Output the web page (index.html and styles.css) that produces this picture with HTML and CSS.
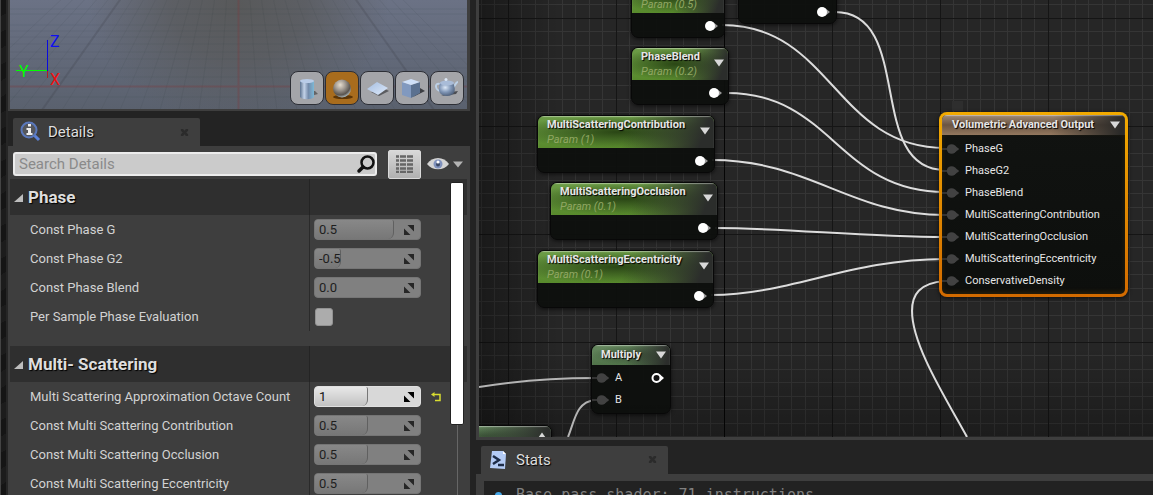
FILE: index.html
```html
<!DOCTYPE html>
<html lang="en">
<head>
<meta charset="utf-8">
<title>Material Editor</title>
<link rel="stylesheet" href="styles.css">
</head>
<body>
<svg class="defs" width="0" height="0" aria-hidden="true">
  <defs>
    <symbol id="expand" viewBox="0 0 12 12"><path d="M4.500 1h6.500v6.500zM1 4.500v6.500h6.500z"/></symbol>
    <symbol id="pin" viewBox="0 0 14 12"><path class="pin-tip" d="M8 2l5 4-5 4z"/><circle cx="5" cy="6" r="5"/></symbol>
    <symbol id="pin-in" viewBox="0 0 24 12"><path class="pin-lead" d="M0 6h8" fill="none"/><path d="M13 2l5 4-5 4z"/><circle cx="10" cy="6" r="5"/></symbol>
    <symbol id="down" viewBox="0 0 10 8"><path d="M0 0.5h10L5 7.5z"/></symbol>
    <symbol id="close" viewBox="0 0 10 10"><path d="M1 1l2.500 0 1.500 2 1.500-2 2.500 0v2L7 5l2 2v2H6.500L5 7 3.500 9H1V7l2-2-2-2z"/></symbol>
    <linearGradient id="steel" x1="0" x2="1"><stop offset="0" stop-color="#5d7390"/><stop offset=".3" stop-color="#c3d2e8"/><stop offset=".6" stop-color="#748bab"/><stop offset="1" stop-color="#7cb8d6"/></linearGradient>
    <radialGradient id="ball" cx=".4" cy=".3" r=".7"><stop offset="0" stop-color="#e6ddcf"/><stop offset=".4" stop-color="#a39c94"/><stop offset=".8" stop-color="#59544f"/><stop offset="1" stop-color="#a9b5b9"/></radialGradient>
    <linearGradient id="sheet" x1="0" x2="1" y1="0" y2="1"><stop offset="0" stop-color="#a4bde0"/><stop offset="1" stop-color="#dfeafa"/></linearGradient>
    <radialGradient id="pot" cx=".4" cy=".35" r=".7"><stop offset="0" stop-color="#dce8f7"/><stop offset=".5" stop-color="#8298b8"/><stop offset="1" stop-color="#4a5b75"/></radialGradient>
  </defs>
</svg>
<main class="editor">
  <div class="edge"></div>
  <section class="left">
    <div class="viewport">
      <svg class="floor" aria-hidden="true">
        <g transform="translate(-10 0)" fill="none">
          <path class="floor-minor" d="M238-167L219 110M238-167L199 110M238-167L179 110M238-167L160 110M238-167L140 110M238-167L120 110M238-167L101 110M238-167L81 110M238-167L62 110M238-167L22 110M238-167L3 110M238-167L-17 110M238-167L-37 110M238-167L-56 110M238-167L258 110M238-167L277 110M238-167L297 110M238-167L316 110M238-167L336 110M238-167L356 110M238-167L375 110M238-167L395 110M238-167L414 110M238-167L453 110M238-167L473 110M238-167L493 110M238-167L512 110M0 97H480M0 77H480M0 68H480M0 59H480M0 52H480M0 44H480M0 37H480M0 31H480M0 25H480M0 14H480M0 9H480"/>
          <path class="floor-major" d="M238-167L42 110M238-167L434 110"/>
          <path class="floor-axis" d="M0 86.500H480M238.500 0V110"/>
        </g>
      </svg>
      <svg class="axes" width="56" height="60" viewBox="0 0 56 60" aria-hidden="true">
        <path d="M37.500 11v31" stroke="#0a0ae0"/><path d="M6 41.500h31" stroke="#0f0"/><path d="M37.500 42v7" stroke="#b02020"/>
        <text x="40" y="18" fill="#1010f0">Z</text><text x="9" y="48" fill="#0f0">Y</text><text x="40" y="56" fill="#f01010">X</text>
      </svg>
      <div class="shapes">
        <button type="button" aria-label="Cylinder"><svg viewBox="0 0 32 32"><path d="M16 25l11-3-3-3h-5z" fill="#444a" /><path d="M9 9v16c2 3 12 3 14 0V9z" fill="url(#steel)"/><ellipse cx="16" cy="9" rx="7" ry="2" fill="#b9cce8"/></svg></button>
        <button type="button" class="on" aria-label="Sphere"><svg viewBox="0 0 32 32"><ellipse cx="17" cy="25" rx="10" ry="2" fill="#5b3507"/><circle cx="16" cy="16.500" r="9" fill="url(#ball)"/></svg></button>
        <button type="button" aria-label="Plane"><svg viewBox="0 0 32 32"><path d="M10 20l8 4 10-5-4-2z" fill="#5b5c60"/><path d="M16 10l11 6-10 7-11-6z" fill="url(#sheet)"/></svg></button>
        <button type="button" aria-label="Cube"><svg viewBox="0 0 32 32"><path d="M17 25l12-6-5-3z" fill="#3c3e43"/><path d="M6 10l9 3v13l-9-3z" fill="#8199bf"/><path d="M15 13l9-3v11l-9 5z" fill="#5b7190"/><path d="M6 10l9-3 9 3-9 3z" fill="#cfe0f8"/></svg></button>
        <button type="button" aria-label="Teapot"><svg viewBox="0 0 32 32"><path d="M10 24l15-2 2-3-7 1z" fill="#4b4d52"/><path d="M9 12c-6-2-5 7 1 7M22 15c3-1 2-5 5-5" fill="none" stroke="#bcd0e6" stroke-width="2"/><path d="M9 11c-3 8 0 13 7 13s10-5 6-13z" fill="url(#pot)"/><ellipse cx="16" cy="11" rx="7" ry="2.500" fill="#a9bcd8"/><circle cx="15" cy="7.500" r="1.500" fill="#dce8f7"/></svg></button>
      </div>
    </div>
    <div class="tabs">
      <div class="tab">
        <svg width="22" height="22" viewBox="0 0 22 22" aria-hidden="true"><path d="M14 14l5 5" stroke="#5d82d8" stroke-width="3"/><circle cx="9" cy="9" r="7.500" fill="#55575c" stroke="#5a78bc" stroke-width="2"/><path d="M8 3h3v2.500H8zM6.500 7H11v5h1.500v2h-6v-2H8V9H6.500z" fill="#eee"/></svg>
        <span>Details</span>
        <button type="button" class="close" aria-label="Close Details"><svg width="9" height="9"><use href="#close"/></svg></button>
      </div>
    </div>
    <div class="details">
      <div class="tools">
        <div class="search">
          <input type="text" placeholder="Search Details" aria-label="Search Details">
          <svg width="20" height="20" viewBox="0 0 20 20" aria-hidden="true"><circle cx="12.500" cy="8.500" r="6" fill="none" stroke="#111" stroke-width="2.500"/><path d="M8 13l-4 4" stroke="#111" stroke-width="3.500" stroke-linecap="round"/></svg>
        </div>
        <button type="button" class="matrix" aria-label="Property matrix"><svg width="17" height="18" viewBox="0 0 17 18"><path d="M0 1.500h17M0 5.500h17M0 9.500h17M0 13.500h17M0 17h17" stroke="#666" stroke-width="2.500" stroke-dasharray="3 1 6 1 6"/></svg></button>
        <button type="button" class="eye" aria-label="View options"><svg width="36" height="16" viewBox="0 0 36 16"><path d="M0 8C5 0 17 0 22 8 17 15 5 15 0 8z" fill="#d4d4d4"/><circle cx="11" cy="8" r="4.500" fill="#8092bd"/><circle cx="11" cy="8.500" r="2" fill="#3b4866"/><circle cx="11" cy="6" r="1.500" fill="#fff"/><path d="M26 5.500h10l-5 6z" fill="#b4b4b4"/></svg></button>
      </div>
      <div class="props">
        <section>
          <h2><svg width="10" height="10" viewBox="0 0 10 10"><path d="M9 1v8H0z"/></svg>Phase</h2>
          <div class="row"><label for="g">Const Phase G</label><div class="spin"><i style="width:75%"></i><input id="g" value="0.5"><svg width="12" height="12"><use href="#expand"/></svg></div></div>
          <div class="row"><label for="g2">Const Phase G2</label><div class="spin"><i style="width:25%"></i><input id="g2" value="-0.5"><svg width="12" height="12"><use href="#expand"/></svg></div></div>
          <div class="row"><label for="pb">Const Phase Blend</label><div class="spin"><input id="pb" value="0.0"><svg width="12" height="12"><use href="#expand"/></svg></div></div>
          <div class="row"><label for="ps">Per Sample Phase Evaluation</label><div class="cell"><input type="checkbox" id="ps"></div></div>
        </section>
        <section>
          <h2><svg width="10" height="10" viewBox="0 0 10 10"><path d="M9 1v8H0z"/></svg>Multi- Scattering</h2>
          <div class="row"><label for="oc">Multi Scattering Approximation Octave Count</label><div class="spin live"><i style="width:50%"></i><input id="oc" value="1"><svg width="12" height="12"><use href="#expand"/></svg></div><button type="button" class="reset" aria-label="Reset to default"><svg width="11" height="10" viewBox="0 0 11 10"><path d="M2 2.500h7v6H4" fill="none" stroke="#d8dc30" stroke-width="1.500"/><path d="M0 2.500L3.500 0v5z" fill="#d8dc30"/></svg></button></div>
          <div class="row"><label for="mc">Const Multi Scattering Contribution</label><div class="spin"><i style="width:50%"></i><input id="mc" value="0.5"><svg width="12" height="12"><use href="#expand"/></svg></div></div>
          <div class="row"><label for="mo">Const Multi Scattering Occlusion</label><div class="spin"><i style="width:50%"></i><input id="mo" value="0.5"><svg width="12" height="12"><use href="#expand"/></svg></div></div>
          <div class="row"><label for="me">Const Multi Scattering Eccentricity</label><div class="spin"><i style="width:50%"></i><input id="me" value="0.5"><svg width="12" height="12"><use href="#expand"/></svg></div></div>
        </section>
        <div class="scroll"><div class="thumb"></div></div>
      </div>
    </div>
  </section>
  <section class="right">
    <div class="graph">
      <svg class="canvas" aria-hidden="true">
        <defs>
          <pattern id="grid" x="29" y="18" width="108" height="108" patternUnits="userSpaceOnUse">
            <path class="minor" d="M13.500 0v108M27.500 0v108M40.500 0v108M54.500 0v108M67.500 0v108M81.500 0v108M94.500 0v108M0 13.500h108M0 27.500h108M0 40.500h108M0 54.500h108M0 67.500h108M0 81.500h108M0 94.500h108"/>
            <path class="major" d="M.5 0v108M0 .5h108"/>
          </pattern>
        </defs>
        <rect width="100%" height="100%" fill="url(#grid)"/>
        <path d="M245.500 0v437" stroke="#050505"/>
      </svg>
      <div class="vignette"></div>
      <svg class="canvas wires" aria-hidden="true">
        <g transform="translate(-479 0)">
          <path d="M722 25C832 25 835 148 945 148"/>
          <path d="M835 12C915 12 865 170 945 170"/>
          <path d="M727 93C832 93 838 192 945 192"/>
          <path d="M712 160C810 160 850 215 945 215"/>
          <path d="M715 228C790 228 860 237 945 237"/>
          <path d="M711 295C790 295 850 259 945 259"/>
          <path d="M945 281C919 283 912 295 912 311C912 345 945 397 967 437"/>
          <path class="dim" d="M479 387C515 381 555 378 595 378M568 437C575 420 576 402 595 400"/>
        </g>
      </svg>
      <article class="node param n-g"><header><div><b></b><em>Param (0.5)</em></div></header><svg class="pin"><use href="#pin"/></svg></article>
      <article class="node n-g2"><svg class="pin"><use href="#pin"/></svg></article>
      <article class="node param n-blend"><header><div><b>PhaseBlend</b><em>Param (0.2)</em></div><svg class="down"><use href="#down"/></svg></header><svg class="pin"><use href="#pin"/></svg></article>
      <article class="node param n-con"><header><div><b>MultiScatteringContribution</b><em>Param (1)</em></div><svg class="down"><use href="#down"/></svg></header><svg class="pin"><use href="#pin"/></svg></article>
      <article class="node param n-occ"><header><div><b>MultiScatteringOcclusion</b><em>Param (0.1)</em></div><svg class="down"><use href="#down"/></svg></header><svg class="pin"><use href="#pin"/></svg></article>
      <article class="node param n-ecc"><header><div><b>MultiScatteringEccentricity</b><em>Param (0.1)</em></div><svg class="down"><use href="#down"/></svg></header><svg class="pin"><use href="#pin"/></svg></article>
      <article class="node math n-mul"><header><b>Multiply</b><svg class="down"><use href="#down"/></svg></header>
        <ul><li><svg class="in"><use href="#pin-in"/></svg>A<svg class="ring" viewBox="0 0 14 12"><path d="M9 2.500l4 3.500-4 3.500z" fill="#fff"/><circle cx="5.500" cy="6" r="4" fill="#111" stroke="#fff" stroke-width="2"/></svg></li><li><svg class="in"><use href="#pin-in"/></svg>B</li></ul>
      </article>
      <article class="node math n-low"><header><svg class="down up"><use href="#down"/></svg></header></article>
      <div class="note"></div>
      <article class="node out n-out"><header><b>Volumetric Advanced Output</b><svg class="down"><use href="#down"/></svg></header>
        <ul>
          <li><svg class="in"><use href="#pin-in"/></svg>PhaseG</li>
          <li><svg class="in"><use href="#pin-in"/></svg>PhaseG2</li>
          <li><svg class="in"><use href="#pin-in"/></svg>PhaseBlend</li>
          <li><svg class="in"><use href="#pin-in"/></svg>MultiScatteringContribution</li>
          <li><svg class="in"><use href="#pin-in"/></svg>MultiScatteringOcclusion</li>
          <li><svg class="in"><use href="#pin-in"/></svg>MultiScatteringEccentricity</li>
          <li><svg class="in"><use href="#pin-in"/></svg>ConservativeDensity</li>
        </ul>
      </article>
    </div>
    <div class="stats">
      <div class="tabs">
        <div class="tab">
          <svg width="20" height="20" viewBox="0 0 20 20" aria-hidden="true"><path d="M4 1h11l3 3-1 15L2 18z" fill="#b4cbf5"/><path d="M15 1l3 3h-3z" fill="#fff"/><path d="M5 6l6 4-6 4M10 15h6" fill="none" stroke="#1d2c48" stroke-width="2.500"/></svg>
          <span>Stats</span>
          <button type="button" class="close" aria-label="Close Stats"><svg width="9" height="9"><use href="#close"/></svg></button>
        </div>
      </div>
      <div class="log"><p><span class="dot"></span>Base pass shader: 71 instructions</p></div>
    </div>
  </section>
</main>
</body>
</html>
```
FILE: styles.css
```css
* { box-sizing: border-box; }
body { margin: 0; background: #232323; color: #d2d2d2; font: 13px/16px Roboto, "Liberation Sans", sans-serif; overflow: hidden; }
button { padding: 0; border: 0; background: none; }
svg { display: block; flex: none; }
.defs { position: absolute; }

.editor { display: grid; grid-template-columns: 8px 462px minmax(0, 1fr); height: 100vh; }
.edge { border-left: 1px solid #444; border-right: 2px solid #262626; background: repeating-linear-gradient(150deg, #151515 0 14px, #1c1c1c 14px 28px); }
.left, .right { display: flex; flex-direction: column; min-width: 0; min-height: 0; }
.right { margin-left: 6px; }

.viewport { position: relative; flex: none; height: 111px; border: solid #3e3e3e; border-width: 0 3px 2px 2px; overflow: hidden;
  background: radial-gradient(ellipse 150px 120px at 50% 5%, #58595a, #595a5ccc 45%, transparent), linear-gradient(#6b7285, #5a616e); }
.floor { width: 100%; height: 100%; }
.floor-minor { stroke: #2b2d33; stroke-opacity: .08; }
.floor-major { stroke: #2b2d33; stroke-opacity: .16; stroke-width: 2; }
.floor-axis { stroke: #7a3c40; stroke-opacity: .35; stroke-width: 2; }
.axes { position: absolute; left: 0; top: 29px; font-size: 16px; }
.shapes { position: absolute; right: 3px; bottom: 4px; display: flex; gap: 1px; }
.shapes button { width: 34px; height: 34px; border: 1px solid #2d2f36; border-radius: 8px; background: #a4a5a9; }
.shapes .on { background: #a86c1d; }

.tabs { display: flex; padding: 7px 5px 0; flex: none; }
.tab { display: flex; align-items: center; gap: 6px; width: 187px; height: 28px; padding: 0 11px 0 7px; background: #3e3e3e; border-radius: 2px 2px 0 0; font-size: 15px; color: #dedede; text-shadow: 1px 1px 1px #000; }
.close { margin-left: auto; fill: #2b2b2b; }

.details { flex: 1; min-height: 0; display: flex; flex-direction: column; padding: 3px 3px 0 2px; background: #3e3e3e; }
.tools { display: flex; align-items: center; height: 30px; padding: 0 4px 0 3px; flex: none; }
.search { display: flex; align-items: center; flex: 1; height: 24px; border: 2px solid #ececec; border-radius: 3px; background: #cbcbcb; }
.search input { flex: 1; min-width: 0; padding: 0 4px; border: 0; background: none; font: 15px/18px Roboto, sans-serif; color: #222; }
.search input::placeholder { color: #8a8a8a; opacity: 1; }
.matrix { display: grid; place-items: center; width: 33px; height: 29px; margin: 0 6px 0 11px; background: linear-gradient(#d8d8d8, #b0b0b0); border: 1px solid #dadada; border-radius: 2px; }

.props { position: relative; flex: 1; min-height: 0; overflow: hidden; }
.props section { margin-bottom: 15px; }
.props h2 { display: flex; align-items: center; gap: 4px; height: 36px; margin: 0; padding: 0 0 1px 4px; background: linear-gradient(90deg, transparent 299px, #242424 299px 300px, transparent 300px) #2f2f2f; font-size: 17px; line-height: 20px; font-weight: 700; color: #dedede; text-shadow: 1px 1px 1px #000; }
.props h2 svg { fill: #bdbdbd; margin-top: 3px; }
.row { display: flex; align-items: center; height: 29px; padding-left: 20px; background: linear-gradient(90deg, transparent 299px, #2a2a2a 299px 300px, transparent 300px); }
.row label { width: 284px; }
.cell { display: flex; }
.spin { position: relative; display: flex; align-items: center; width: 107px; height: 21px; padding-right: 5px; border-radius: 4px; background: #808080; border: 1px solid #757575; overflow: hidden; color: #1e1e1e; fill: #262626; }
.spin i { position: absolute; inset: 0 auto 0 0; border-right: 1px solid #606060; border-radius: 0 2px 6px 0; background: linear-gradient(#888, #777); }
.spin input { position: relative; flex: 1; min-width: 0; padding: 0 4px; border: 0; background: none; font: inherit; color: inherit; }
.spin svg { position: relative; }
.live { background: #d8d8d8; border-color: #e0e0e0; color: #111; fill: #000; }
.live i { background: linear-gradient(#e8e8e8, #c2c2c2); border-right-color: #777; }
.cell input { appearance: none; width: 18px; height: 18px; margin: 0 1px; border: 1px solid #929292; border-radius: 3px; background: #acacac; }
.reset { margin-left: 10px; }
.scroll { position: absolute; top: 3px; right: 3px; bottom: 0; width: 14px; background: linear-gradient(90deg, transparent 7px, #666 7px 8px, transparent 8px); }
.thumb { height: 243px; border: 1px solid #222; border-radius: 2px; background: #fff; }

.graph { position: relative; flex: 1; min-height: 0; overflow: hidden; border: solid #3e3e3e; border-width: 0 0 3px 3px; background: #262626; }
.canvas { position: absolute; inset: 0; width: 100%; height: 100%; }
.minor { stroke: #353535; fill: none; }
.major { stroke: #151515; fill: none; }
.vignette { position: absolute; inset: 0; background: linear-gradient(90deg, #0005, transparent 80px), linear-gradient(0deg, #0004, transparent 90px); }
.wires { fill: none; stroke: #dcdcdc; stroke-width: 2; }
.dim { stroke: #b4b4b4; }

.node { position: absolute; border: 1px solid #080808; border-radius: 7px; background: #0d0f0df0; box-shadow: 0 1px 4px #000a; overflow: hidden; color: #e6e6e6; font-size: 11px; line-height: 14px; }
.node header { display: flex; align-items: center; justify-content: space-between; padding: 0 4px 0 9px; box-shadow: inset 0 1px 1px #fff6; }
.node b { display: block; font-size: 11px; line-height: 14px; text-shadow: 1px 1px 1px #000; white-space: nowrap; }
.node em { display: block; margin-top: 1px; color: #91a763; }
.node b:empty { height: 14px; }
.node ul { margin: 0; padding: 3px 0 2px; list-style: none; }
.node li { display: flex; align-items: center; height: 22px; }
.down { width: 10px; height: 8px; fill: #d8d8d8; }
.param .down { margin-bottom: 3px; }
.up { margin-left: auto; transform: rotate(180deg); }
.pin { width: 14px; height: 12px; margin: 7px 5px 5px auto; fill: #fff; }
.pin-tip { fill: #9a9a9a; }
.in { width: 23px; height: 12px; fill: #424242; stroke: none; }
.pin-lead { stroke: #333; stroke-width: 2; }
.ring { width: 14px; height: 12px; margin: 0 5px 0 auto; }
.param header { height: 32px; background: linear-gradient(110deg, transparent 50%, #2b2d2b 92%), radial-gradient(ellipse 60% 50% at 45% 50%, #2a4615, #2a461577 55%, transparent), linear-gradient(#6c9c47, #588a2c); }
.math header { height: 20px; background: linear-gradient(100deg, transparent 45%, #2b2d2b 95%), radial-gradient(ellipse 50% 50% at 50% 50%, #3c5438, transparent), linear-gradient(#66885f, #507349); }
.out header { height: 20px; padding: 0 5px 0 10px; background: linear-gradient(100deg, transparent 60%, #2b2a28 97%), linear-gradient(#a08c78, #6b5543 50%, #94785f); }
.n-g { left: 152px; top: -20px; width: 94px; }
.n-g2 { left: 259px; top: -34px; width: 99px; padding-top: 32px; }
.n-blend { left: 152px; top: 47px; width: 98px; }
.n-con { left: 58px; top: 115px; width: 178px; }
.n-occ { left: 71px; top: 182px; width: 168px; }
.n-ecc { left: 58px; top: 250px; width: 177px; }
.n-mul { left: 112px; top: 344px; width: 80px; }
.n-mul ul { padding-top: 2px; }
.n-low { left: -60px; top: 425px; width: 133px; height: 58px; }
.note { position: absolute; left: 473px; top: 101px; width: 11px; height: 10px; background: #2e2e2e; }
.n-out { left: 460px; top: 112px; width: 189px; border: 3px solid transparent; border-radius: 8px; background: linear-gradient(#111311, #0d0f0d) padding-box, linear-gradient(#f2aa00, #d26a00) border-box; }
.n-out ul { box-shadow: inset 0 -2px 5px #6a430055; }

.stats { height: 55px; flex: none; }
.stats .tabs { padding-top: 6px; }
.stats .tab { gap: 8px; padding-bottom: 1px; }
.log { height: 21px; border: solid #3e3e3e; border-width: 7px 0 0 8px; background: #222; overflow: hidden; }
.log p { display: flex; align-items: center; gap: 14px; margin: 0; padding: 5px 0 0 11px; font: 15px/18px "DejaVu Sans Mono", monospace; color: #808080; white-space: pre; }
.dot { width: 7px; height: 7px; border-radius: 4px; background: #45a7e8; }
```
